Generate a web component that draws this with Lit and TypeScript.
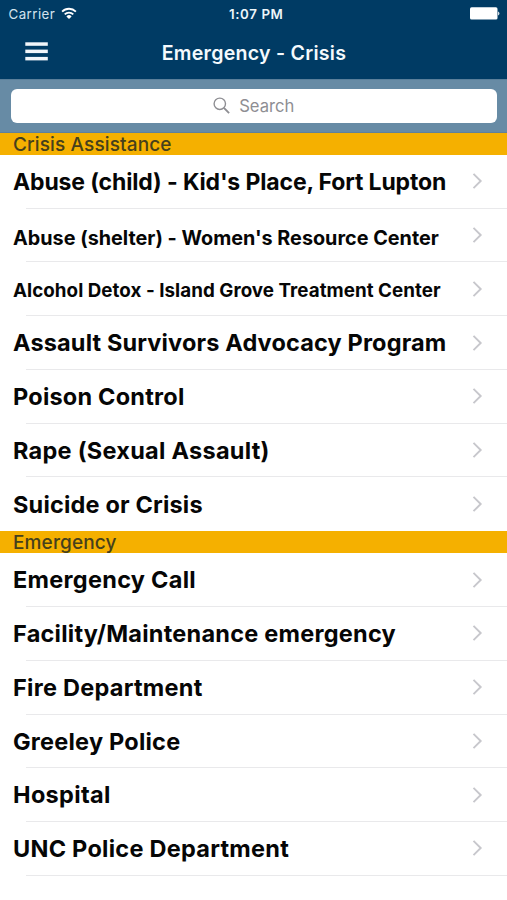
import { LitElement, html, css } from "lit";
import { customElement, property } from "lit/decorators.js";

interface Entry {
  label: string;
  size?: number;
  spacing?: number;
}

interface Section {
  title: string;
  entries: Entry[];
}

const SECTIONS: Section[] = [
  {
    title: "Crisis Assistance",
    entries: [
      { label: "Abuse (child) - Kid's Place, Fort Lupton", size: 23, spacing: -0.14 },
      { label: "Abuse (shelter) - Women's Resource Center", size: 19.8, spacing: 0.01 },
      { label: "Alcohol Detox - Island Grove Treatment Center", size: 18.8, spacing: 0.04 },
      { label: "Assault Survivors Advocacy Program", spacing: 0.15 },
      { label: "Poison Control", spacing: 0.22 },
      { label: "Rape (Sexual Assault)", spacing: 0.27 },
      { label: "Suicide or Crisis", spacing: 0.18 },
    ],
  },
  {
    title: "Emergency",
    entries: [
      { label: "Emergency Call", spacing: 0.28 },
      { label: "Facility/Maintenance emergency", spacing: 0.24 },
      { label: "Fire Department", spacing: 0.26 },
      { label: "Greeley Police", spacing: 0.22 },
      { label: "Hospital", spacing: 0.32 },
      { label: "UNC Police Department", spacing: 0.26 },
    ],
  },
];

@customElement("status-bar")
export class StatusBar extends LitElement {
  static styles = css`
    :host {
      display: grid;
      grid-template-columns: 1fr auto 1fr;
      align-items: center;
      height: 27px;
      padding: 0 7px 0 8.5px;
      color: #edf5fa;
      font-size: 13.3px;
    }
    .carrier {
      display: flex;
      align-items: center;
      gap: 6px;
      letter-spacing: 0.45px;
      color: #d3e3ee;
    }
    .time {
      font-weight: 600;
      letter-spacing: 0.6px;
      margin-left: 4px;
    }
    .battery {
      justify-self: end;
    }
    svg {
      display: block;
    }
  `;

  render() {
    return html`
      <div class="carrier">
        <span>Carrier</span>
        <svg width="16" height="13" viewBox="0 0 16 13" fill="none" stroke="#fff" stroke-width="1.8">
          <path d="M1.1 4.6a9.8 9.8 0 0 1 13.8 0" />
          <path d="M3.7 7.3a6.1 6.1 0 0 1 8.6 0" />
          <path d="M8 12 5.4 9.4a3.7 3.7 0 0 1 5.2 0Z" fill="#fff" stroke="none" />
        </svg>
      </div>
      <span class="time">1:07 PM</span>
      <svg class="battery" width="30" height="13" viewBox="0 0 30 13" fill="#fff">
        <rect x="0" y="0.3" width="27.5" height="12.2" rx="1.6" />
        <path d="M28.2 4.4a2.3 2.3 0 0 1 0 4Z" />
      </svg>
    `;
  }
}

@customElement("nav-bar")
export class NavBar extends LitElement {
  @property() heading = "";

  static styles = css`
    :host {
      display: grid;
      grid-template-columns: 1fr auto 1fr;
      align-items: center;
      height: 52px;
      padding: 0 25px;
      color: #f4f9fd;
    }
    .menu {
      display: block;
      margin-top: -3px;
    }
    .heading {
      font-size: 19.6px;
      font-weight: 600;
      letter-spacing: 0.25px;
      line-height: 24px;
      margin: -1px 0 0 1px;
      white-space: nowrap;
    }
  `;

  render() {
    return html`
      <svg class="menu" width="23" height="19" viewBox="0 0 23 19" fill="#f1f6fa">
        <rect x="0.3" y="0.3" width="22.5" height="3.5" />
        <rect x="0.3" y="7.6" width="22.5" height="3.5" />
        <rect x="0.3" y="14.9" width="22.5" height="3.5" />
      </svg>
      <div class="heading">${this.heading}</div>
    `;
  }
}

@customElement("search-bar")
export class SearchBar extends LitElement {
  static styles = css`
    :host {
      display: block;
      box-sizing: border-box;
      height: 53.9px;
      padding: 8.5px 10px 0 10.5px;
      background: #678ba5;
      border-top: 1px solid #5a7f9a;
      border-bottom: 1px solid #60809a;
    }
    .field {
      display: flex;
      align-items: center;
      justify-content: center;
      gap: 9px;
      height: 34.3px;
      border-radius: 6px;
      background: #fff;
      color: #8e8e93;
      font-size: 16.6px;
    }
  `;

  render() {
    return html`
      <div class="field">
        <svg width="17" height="17" viewBox="0 0 17 17" fill="none" stroke="#8e8e93" stroke-width="1.4">
          <circle cx="6.8" cy="6.8" r="5.7" />
          <path d="m10.9 10.9 5.2 5.2" stroke-width="1.9" />
        </svg>
        <span>Search</span>
      </div>
    `;
  }
}

@customElement("contact-row")
export class ContactRow extends LitElement {
  @property({ attribute: false }) entry!: Entry;
  @property({ type: Boolean }) last = false;

  static styles = css`
    :host {
      display: block;
      height: 53.75px;
      padding-left: 25.5px;
    }
    .cell {
      display: flex;
      align-items: center;
      justify-content: space-between;
      box-sizing: border-box;
      height: 100%;
      padding-right: 24px;
      border-bottom: 1px solid #e9e9eb;
    }
    .cell.plain {
      border-bottom-color: transparent;
    }
    .label {
      margin-left: -12.5px;
      padding-top: 1.4px;
      font-weight: 650;
      line-height: 30px;
      white-space: nowrap;
      color: #060606;
    }
    .label.small {
      padding-top: 5px;
    }
  `;

  render() {
    const { label, size = 23.5, spacing = 0 } = this.entry;
    return html`
      <div class="cell ${this.last ? "plain" : ""}">
        <span
          class="label ${size <= 20 ? "small" : ""}"
          style="font-size:${size}px;letter-spacing:${spacing}px"
          >${label}</span
        >
        <svg width="11" height="18" viewBox="0 0 11 18" fill="none" stroke="#c7c7cc" stroke-width="1.9">
          <path d="m1.5 1.8 7.2 7.2-7.2 7.2" />
        </svg>
      </div>
    `;
  }
}

@customElement("app-root")
export class AppRoot extends LitElement {
  static styles = css`
    :host {
      display: block;
      height: 900px;
      overflow: hidden;
      background: #fff;
      font-family: Inter, "Liberation Sans", sans-serif;
    }
    .top {
      background: #003b64;
    }
    .title {
      height: 22.1px;
      padding-left: 13px;
      background: #f5b000;
      color: #46401c;
      font-size: 19px;
      font-weight: 500;
      letter-spacing: 0.13px;
      line-height: 23px;
    }
  `;

  render() {
    return html`
      <div class="top">
        <status-bar></status-bar>
        <nav-bar heading="Emergency - Crisis"></nav-bar>
      </div>
      <search-bar></search-bar>
      ${SECTIONS.map(
        (section, s) => html`
          <div class="title">${section.title}</div>
          ${section.entries.map(
            (entry, i) => html`<contact-row
              .entry=${entry}
              ?last=${s < SECTIONS.length - 1 && i === section.entries.length - 1}
            ></contact-row>`
          )}
        `
      )}
    `;
  }
}
